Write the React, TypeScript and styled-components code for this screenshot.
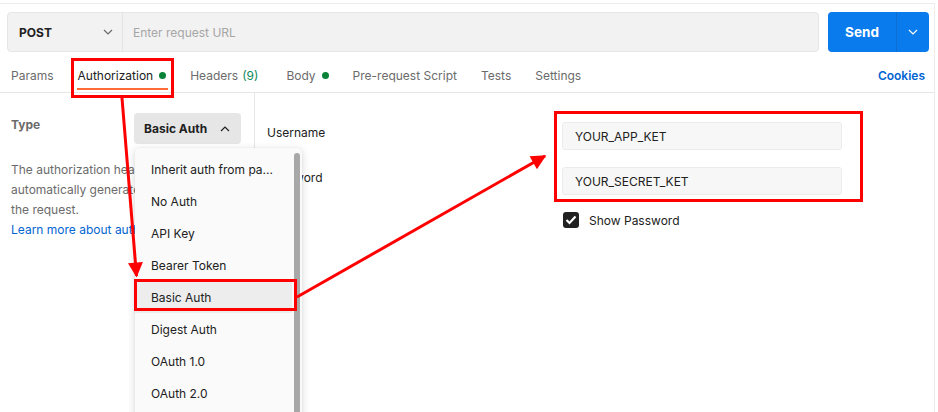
import { FC } from 'react'
import styled, { createGlobalStyle } from 'styled-components'

const GlobalStyle = createGlobalStyle`
    body {
        margin: 0;
        background: #fff;
        font-family: Inter, 'Noto Sans', sans-serif;
        color: #212121;
    }
`

const Page = styled.div`
    position: relative;
    width: 938px;
    height: 412px;
    overflow: hidden;
    background: #fff;
`

const Frame = styled.div`
    box-sizing: border-box;
    width: 935px;
    height: 409px;
    margin-top: 3px;
    border-top: 1px solid #ececec;
    border-right: 1px solid #ececec;
    display: flex;
    flex-direction: column;
`

const RequestBar = styled.div`
    display: flex;
    gap: 9px;
    padding: 8px 5px 0 7px;
    height: 48px;
    box-sizing: border-box;
`

const UrlGroup = styled.div`
    flex: 1;
    display: flex;
    background: #f2f2f2;
    border: 1px solid #e6e6e6;
    border-radius: 4px;
    box-sizing: border-box;
    height: 40px;
`

const Method = styled.div`
    width: 115px;
    box-sizing: border-box;
    display: flex;
    align-items: center;
    justify-content: space-between;
    padding: 0 9px 0 11px;
    border-right: 1px solid #e3e3e3;
    font-size: 12px;
    font-weight: 700;
    color: #212121;
`

const UrlInput = styled.div`
    flex: 1;
    display: flex;
    align-items: center;
    padding-left: 10px;
    font-size: 12px;
    color: #a6a6a6;
`

const SendButton = styled.div`
    display: flex;
    height: 40px;
    width: 101px;
    border-radius: 4px;
    background: #097bed;
    color: #fff;
    overflow: hidden;
`

const SendLabel = styled.div`
    width: 68px;
    display: flex;
    align-items: center;
    justify-content: center;
    font-size: 13.5px;
    font-weight: 700;
    border-right: 1px solid #0a6fd4;
`

const SendMore = styled.div`
    flex: 1;
    display: flex;
    align-items: center;
    justify-content: center;
`

const TabRow = styled.div`
    display: flex;
    align-items: stretch;
    gap: 24px;
    height: 41px;
    box-sizing: border-box;
    padding: 7px 9px 0 11px;
    border-bottom: 1px solid #e6e6e6;
`

const Tab = styled.div<{ $active?: boolean }>`
    position: relative;
    display: flex;
    align-items: center;
    gap: 6px;
    font-size: 12px;
    color: ${(p) => (p.$active ? '#212121' : '#6b6b6b')};

    ${(p) =>
        p.$active &&
        `
        &::after {
            content: '';
            position: absolute;
            left: -1px;
            right: -2px;
            bottom: 2px;
            height: 2px;
            background: #ff6c37;
        }
    `}
`

const Count = styled.span`
    margin-left: 4px;
    margin-right: 4px;
    color: #0b8a5b;
`

const Dot = styled.span`
    width: 7px;
    height: 7px;
    border-radius: 50%;
    background: #0a8237;
`

const CookiesLink = styled.div`
    margin-left: auto;
    display: flex;
    align-items: center;
    font-size: 12px;
    font-weight: 600;
    color: #0265d2;
`

const AuthBody = styled.div`
    flex: 1;
    display: flex;
`

const LeftPane = styled.div`
    width: 255px;
    box-sizing: border-box;
    border-right: 1px solid #e6e6e6;
    padding: 20px 12px 0 11px;
`

const TypeRow = styled.div`
    display: flex;
    align-items: flex-start;
`

const TypeLabel = styled.div`
    width: 123px;
    padding-top: 5px;
    font-size: 12px;
    line-height: 14px;
    font-weight: 700;
    color: #6b6b6b;
`

const TypeSelect = styled.div`
    position: relative;
    width: 107px;
    height: 31px;
    box-sizing: border-box;
    border-radius: 4px;
    background: #e6e6e6;
    display: flex;
    align-items: center;
    justify-content: space-between;
    padding: 0 11px 0 10px;
    font-size: 12px;
    font-weight: 700;
    color: #212121;
`

const Description = styled.p`
    margin: 16px 0 0;
    font-size: 12px;
    line-height: 20px;
    color: #6b6b6b;
`

const LearnMore = styled.span`
    display: block;
    color: #0265d2;
`

const Menu = styled.div`
    position: absolute;
    top: 35px;
    left: 1px;
    width: 167px;
    height: 300px;
    display: flex;
    background: #fafafa;
    border-radius: 4px;
    box-shadow: 0 2px 8px rgba(0, 0, 0, 0.16), 0 0 1px rgba(0, 0, 0, 0.12);
    font-weight: 400;
    z-index: 2;
`

const MenuList = styled.div`
    flex: 1;
    padding-top: 5px;
`

const MenuItem = styled.div<{ $selected?: boolean }>`
    height: 32px;
    display: flex;
    align-items: center;
    padding-left: 16px;
    font-size: 12px;
    color: #212121;
    white-space: nowrap;
    background: ${(p) => (p.$selected ? '#ededed' : 'transparent')};
`

const ScrollTrack = styled.div`
    width: 10px;
    padding: 5px 2px 0 2px;
    box-sizing: border-box;
`

const ScrollThumb = styled.div`
    height: 100%;
    width: 6px;
    border-radius: 3px;
    background: #a8a8a8;
`

const RightPane = styled.div`
    flex: 1;
    padding: 29px 0 0 12px;
`

const FieldGrid = styled.div`
    display: grid;
    grid-template-columns: 295px 280px;
    row-gap: 17px;
    align-items: start;
`

const FieldLabel = styled.div`
    padding-top: 4px;
    font-size: 12px;
    line-height: 14px;
    color: #212121;
`

const FieldInput = styled.div`
    height: 28px;
    box-sizing: border-box;
    display: flex;
    align-items: center;
    padding-left: 12px;
    background: #f7f7f7;
    border: 1px solid #ececec;
    border-radius: 3px;
    font-size: 12px;
    color: #212121;
`

const CheckRow = styled.div`
    display: flex;
    align-items: center;
    gap: 10px;
    margin: 17px 0 0 296px;
    font-size: 12px;
    color: #212121;
`

const CheckBox = styled.div`
    width: 16px;
    height: 16px;
    border-radius: 3px;
    background: #212121;
    display: flex;
    align-items: center;
    justify-content: center;
`

const Annotations = styled.svg`
    position: absolute;
    inset: 0;
    pointer-events: none;
    z-index: 5;
`

const Chevron: FC<{ up?: boolean; color?: string }> = ({ up, color = '#6b6b6b' }) => (
    <svg width="10" height="6" viewBox="0 0 10 6">
        <polyline
            points={up ? '1,5 5,1 9,5' : '1,1 5,5 9,1'}
            fill="none"
            stroke={color}
            strokeWidth="1.2"
        />
    </svg>
)

const authTypes = [
    'Inherit auth from pa...',
    'No Auth',
    'API Key',
    'Bearer Token',
    'Basic Auth',
    'Digest Auth',
    'OAuth 1.0',
    'OAuth 2.0',
    'Hawk Authentication',
]

const tabs = [
    { label: 'Params' },
    { label: 'Authorization', dot: true, active: true },
    { label: 'Headers', count: 9 },
    { label: 'Body', dot: true },
    { label: 'Pre-request Script' },
    { label: 'Tests' },
    { label: 'Settings' },
]

const App: FC = () => {
    return (
        <Page>
            <GlobalStyle />
            <Frame>
                <RequestBar>
                    <UrlGroup>
                        <Method>
                            POST
                            <Chevron />
                        </Method>
                        <UrlInput>Enter request URL</UrlInput>
                    </UrlGroup>
                    <SendButton>
                        <SendLabel>Send</SendLabel>
                        <SendMore>
                            <Chevron color="#fff" />
                        </SendMore>
                    </SendButton>
                </RequestBar>

                <TabRow>
                    {tabs.map((t) => (
                        <Tab key={t.label} $active={t.active}>
                            <span>
                                {t.label}
                                {t.count !== undefined && <Count>({t.count})</Count>}
                            </span>
                            {t.dot && <Dot />}
                        </Tab>
                    ))}
                    <CookiesLink>Cookies</CookiesLink>
                </TabRow>

                <AuthBody>
                    <LeftPane>
                        <TypeRow>
                            <TypeLabel>Type</TypeLabel>
                            <TypeSelect>
                                Basic Auth
                                <Chevron up color="#212121" />
                                <Menu>
                                    <MenuList>
                                        {authTypes.map((a) => (
                                            <MenuItem key={a} $selected={a === 'Basic Auth'}>
                                                {a}
                                            </MenuItem>
                                        ))}
                                    </MenuList>
                                    <ScrollTrack>
                                        <ScrollThumb />
                                    </ScrollTrack>
                                </Menu>
                            </TypeSelect>
                        </TypeRow>
                        <Description>
                            The authorization header will be automatically generated when you send
                            the request.
                            <LearnMore>Learn more about authorization</LearnMore>
                        </Description>
                    </LeftPane>

                    <RightPane>
                        <FieldGrid>
                            <FieldLabel>Username</FieldLabel>
                            <FieldInput>YOUR_APP_KET</FieldInput>
                            <FieldLabel>Password</FieldLabel>
                            <FieldInput>YOUR_SECRET_KET</FieldInput>
                        </FieldGrid>
                        <CheckRow>
                            <CheckBox>
                                <svg width="12" height="10" viewBox="0 0 12 10">
                                    <polyline
                                        points="1.5,5 4.5,8 10.5,1.5"
                                        fill="none"
                                        stroke="#fff"
                                        strokeWidth="2.2"
                                    />
                                </svg>
                            </CheckBox>
                            Show Password
                        </CheckRow>
                    </RightPane>
                </AuthBody>
            </Frame>

            <Annotations width="938" height="412" viewBox="0 0 938 412">
                <defs>
                    <marker
                        id="head"
                        viewBox="0 0 10 10"
                        refX="9"
                        refY="5"
                        markerWidth="5.5"
                        markerHeight="5"
                        orient="auto"
                    >
                        <path d="M0,0 L10,5 L0,10 z" fill="#ff0000" />
                    </marker>
                </defs>
                <g fill="none" stroke="#ff0000" strokeWidth="3">
                    <rect x="72.5" y="59.5" width="100" height="37" />
                    <rect x="135.5" y="280.5" width="160" height="29" />
                    <rect x="555.5" y="112.5" width="306" height="88" />
                    <line x1="122" y1="98" x2="136.5" y2="276" markerEnd="url(#head)" />
                    <line x1="297" y1="297" x2="545" y2="156" markerEnd="url(#head)" />
                </g>
            </Annotations>
        </Page>
    )
}

export default App
